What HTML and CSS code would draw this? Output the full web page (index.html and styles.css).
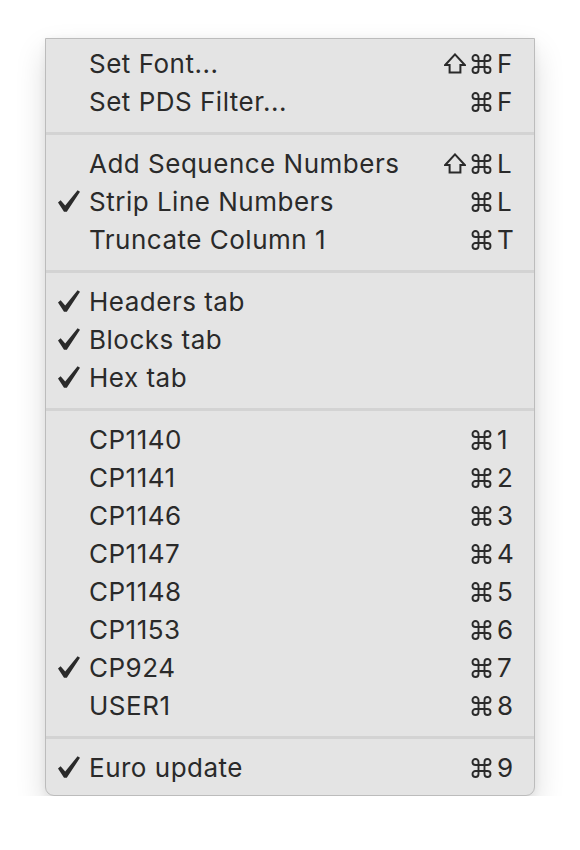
FILE: index.html
```html
<!DOCTYPE html>
<html>
<head>
<meta charset="utf-8">
<link rel="stylesheet" href="styles.css">
</head>
<body>
<div class="page">
  <div class="menu">
    <div class="item"><span class="check"></span><span class="label">Set Font...</span><span class="keys"><svg class="shift" viewBox="0 0 22 21" width="22" height="21"><polygon points="11,1.4 20.8,12 16.4,12 16.4,19.6 5.6,19.6 5.6,12 1.2,12"/></svg><svg class="cmd" viewBox="0 0 20 20" width="21" height="20"><path d="M7,7 V4 A3,3 0 1 0 4,7 H16 A3,3 0 1 0 13,4 V16 A3,3 0 1 0 16,13 H4 A3,3 0 1 0 7,16 Z"/></svg><span class="key">F</span></span></div>
    <div class="item"><span class="check"></span><span class="label">Set PDS Filter...</span><span class="keys"><svg class="cmd" viewBox="0 0 20 20" width="21" height="20"><path d="M7,7 V4 A3,3 0 1 0 4,7 H16 A3,3 0 1 0 13,4 V16 A3,3 0 1 0 16,13 H4 A3,3 0 1 0 7,16 Z"/></svg><span class="key">F</span></span></div>
    <div class="sep"></div>
    <div class="item"><span class="check"></span><span class="label">Add Sequence Numbers</span><span class="keys"><svg class="shift" viewBox="0 0 22 21" width="22" height="21"><polygon points="11,1.4 20.8,12 16.4,12 16.4,19.6 5.6,19.6 5.6,12 1.2,12"/></svg><svg class="cmd" viewBox="0 0 20 20" width="21" height="20"><path d="M7,7 V4 A3,3 0 1 0 4,7 H16 A3,3 0 1 0 13,4 V16 A3,3 0 1 0 16,13 H4 A3,3 0 1 0 7,16 Z"/></svg><span class="key">L</span></span></div>
    <div class="item"><span class="check"><svg viewBox="0 0 22 22" width="22" height="22"><polygon points="0,12.6 2.6,10.2 7.2,15.6 19.6,0.2 22,1.8 8.8,21.8 6,21.8"/></svg></span><span class="label">Strip Line Numbers</span><span class="keys"><svg class="cmd" viewBox="0 0 20 20" width="21" height="20"><path d="M7,7 V4 A3,3 0 1 0 4,7 H16 A3,3 0 1 0 13,4 V16 A3,3 0 1 0 16,13 H4 A3,3 0 1 0 7,16 Z"/></svg><span class="key">L</span></span></div>
    <div class="item"><span class="check"></span><span class="label">Truncate Column 1</span><span class="keys"><svg class="cmd" viewBox="0 0 20 20" width="21" height="20"><path d="M7,7 V4 A3,3 0 1 0 4,7 H16 A3,3 0 1 0 13,4 V16 A3,3 0 1 0 16,13 H4 A3,3 0 1 0 7,16 Z"/></svg><span class="key">T</span></span></div>
    <div class="sep"></div>
    <div class="item"><span class="check"><svg viewBox="0 0 22 22" width="22" height="22"><polygon points="0,12.6 2.6,10.2 7.2,15.6 19.6,0.2 22,1.8 8.8,21.8 6,21.8"/></svg></span><span class="label">Headers tab</span><span class="keys"></span></div>
    <div class="item"><span class="check"><svg viewBox="0 0 22 22" width="22" height="22"><polygon points="0,12.6 2.6,10.2 7.2,15.6 19.6,0.2 22,1.8 8.8,21.8 6,21.8"/></svg></span><span class="label">Blocks tab</span><span class="keys"></span></div>
    <div class="item"><span class="check"><svg viewBox="0 0 22 22" width="22" height="22"><polygon points="0,12.6 2.6,10.2 7.2,15.6 19.6,0.2 22,1.8 8.8,21.8 6,21.8"/></svg></span><span class="label">Hex tab</span><span class="keys"></span></div>
    <div class="sep"></div>
    <div class="item"><span class="check"></span><span class="label">CP1140</span><span class="keys"><svg class="cmd" viewBox="0 0 20 20" width="21" height="20"><path d="M7,7 V4 A3,3 0 1 0 4,7 H16 A3,3 0 1 0 13,4 V16 A3,3 0 1 0 16,13 H4 A3,3 0 1 0 7,16 Z"/></svg><span class="key">1</span></span></div>
    <div class="item"><span class="check"></span><span class="label">CP1141</span><span class="keys"><svg class="cmd" viewBox="0 0 20 20" width="21" height="20"><path d="M7,7 V4 A3,3 0 1 0 4,7 H16 A3,3 0 1 0 13,4 V16 A3,3 0 1 0 16,13 H4 A3,3 0 1 0 7,16 Z"/></svg><span class="key">2</span></span></div>
    <div class="item"><span class="check"></span><span class="label">CP1146</span><span class="keys"><svg class="cmd" viewBox="0 0 20 20" width="21" height="20"><path d="M7,7 V4 A3,3 0 1 0 4,7 H16 A3,3 0 1 0 13,4 V16 A3,3 0 1 0 16,13 H4 A3,3 0 1 0 7,16 Z"/></svg><span class="key">3</span></span></div>
    <div class="item"><span class="check"></span><span class="label">CP1147</span><span class="keys"><svg class="cmd" viewBox="0 0 20 20" width="21" height="20"><path d="M7,7 V4 A3,3 0 1 0 4,7 H16 A3,3 0 1 0 13,4 V16 A3,3 0 1 0 16,13 H4 A3,3 0 1 0 7,16 Z"/></svg><span class="key">4</span></span></div>
    <div class="item"><span class="check"></span><span class="label">CP1148</span><span class="keys"><svg class="cmd" viewBox="0 0 20 20" width="21" height="20"><path d="M7,7 V4 A3,3 0 1 0 4,7 H16 A3,3 0 1 0 13,4 V16 A3,3 0 1 0 16,13 H4 A3,3 0 1 0 7,16 Z"/></svg><span class="key">5</span></span></div>
    <div class="item"><span class="check"></span><span class="label">CP1153</span><span class="keys"><svg class="cmd" viewBox="0 0 20 20" width="21" height="20"><path d="M7,7 V4 A3,3 0 1 0 4,7 H16 A3,3 0 1 0 13,4 V16 A3,3 0 1 0 16,13 H4 A3,3 0 1 0 7,16 Z"/></svg><span class="key">6</span></span></div>
    <div class="item"><span class="check"><svg viewBox="0 0 22 22" width="22" height="22"><polygon points="0,12.6 2.6,10.2 7.2,15.6 19.6,0.2 22,1.8 8.8,21.8 6,21.8"/></svg></span><span class="label">CP924</span><span class="keys"><svg class="cmd" viewBox="0 0 20 20" width="21" height="20"><path d="M7,7 V4 A3,3 0 1 0 4,7 H16 A3,3 0 1 0 13,4 V16 A3,3 0 1 0 16,13 H4 A3,3 0 1 0 7,16 Z"/></svg><span class="key">7</span></span></div>
    <div class="item"><span class="check"></span><span class="label">USER1</span><span class="keys"><svg class="cmd" viewBox="0 0 20 20" width="21" height="20"><path d="M7,7 V4 A3,3 0 1 0 4,7 H16 A3,3 0 1 0 13,4 V16 A3,3 0 1 0 16,13 H4 A3,3 0 1 0 7,16 Z"/></svg><span class="key">8</span></span></div>
    <div class="sep"></div>
    <div class="item"><span class="check"><svg viewBox="0 0 22 22" width="22" height="22"><polygon points="0,12.6 2.6,10.2 7.2,15.6 19.6,0.2 22,1.8 8.8,21.8 6,21.8"/></svg></span><span class="label">Euro update</span><span class="keys"><svg class="cmd" viewBox="0 0 20 20" width="21" height="20"><path d="M7,7 V4 A3,3 0 1 0 4,7 H16 A3,3 0 1 0 13,4 V16 A3,3 0 1 0 16,13 H4 A3,3 0 1 0 7,16 Z"/></svg><span class="key">9</span></span></div>
  </div>
</div>
</body>
</html>
```

FILE: styles.css
```css
html, body {
  margin: 0;
  padding: 0;
  background: #ffffff;
}

.page {
  padding: 38px 0 0 45px;
}

.menu {
  box-sizing: border-box;
  width: 490px;
  background: #e4e4e4;
  border: 1px solid #bcbcbc;
  border-radius: 0 0 9px 9px;
  padding: 6px 0 8px 0;
  box-shadow: 0 14px 30px rgba(0, 0, 0, 0.15), 0 2px 8px rgba(0, 0, 0, 0.06);
  font-family: Inter, "Liberation Sans", "DejaVu Sans", sans-serif;
  font-size: 26px;
  letter-spacing: 0.5px;
  color: #2a2a2a;
}

.item {
  display: flex;
  align-items: center;
  height: 38px;
  line-height: 38px;
  padding: 0 17px 0 12px;
}

.check {
  width: 31px;
  height: 38px;
  flex: none;
  display: flex;
  align-items: center;
}

.check svg {
  display: block;
  fill: #2a2a2a;
  margin-top: -2px;
}

.label {
  flex: 1;
  white-space: nowrap;
}

.keys {
  display: flex;
  align-items: center;
}

.shift {
  display: block;
  fill: none;
  stroke: #2a2a2a;
  stroke-width: 2;
  stroke-linejoin: miter;
  margin-right: 5px;
  margin-top: -1px;
}

.cmd {
  display: block;
  fill: none;
  stroke: #2a2a2a;
  stroke-width: 1.9;
  margin-right: 5px;
  margin-top: -1px;
}

.key {
  width: 20px;
  text-align: left;
  letter-spacing: 0;
}

.sep {
  height: 3px;
  background: #d3d3d3;
  margin: 11px 0 10px 0;
}
```
